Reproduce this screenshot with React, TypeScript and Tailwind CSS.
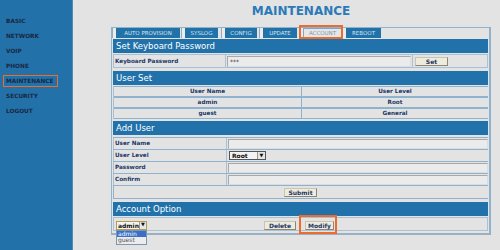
import React from "react";

const Tab = ({ label, className, active }: { label: string; className: string; active?: boolean }) => (
  <div className={"flex h-full items-stretch " + className}>
    <div className="w-[4px] shrink-0 border-l border-[#9aa9b8] bg-[#ececec]" />
    {active ? (
      <div className="relative flex flex-1 items-center justify-center border border-[#7fa6c6] bg-[#e6e6e6] text-[5.5px] text-[#7b96b1]">
        {label}
        <span className="absolute -left-[5px] -right-[2px] -top-[4px] -bottom-[2px] border-2 border-[#ec6b2d]" />
      </div>
    ) : (
      <div className="flex flex-1 items-center justify-center bg-[#2272aa] text-[5.5px] text-[#d6e4ef]">{label}</div>
    )}
  </div>
);

const Header = ({ title, className }: { title: string; className?: string }) => (
  <div className={"flex h-[14px] items-center bg-[#2172aa] pl-[3px] text-[8.5px] text-white " + (className ?? "")}>{title}</div>
);

const Btn = ({ label, className }: { label: string; className?: string }) => (
  <div
    className={
      "flex h-[9px] items-center justify-center border border-[#c8c4b2] border-b-[#8a877a] border-r-[#8a877a] bg-[#eeebdc] text-[6px] font-bold text-[#1d3766] " +
      (className ?? "")
    }
  >
    {label}
  </div>
);

const Field = () => (
  <div className="h-[10px] flex-1 border border-[#a8a8a8] border-b-[#dcdcdc] border-r-[#dcdcdc] bg-[#ebebeb]" />
);

export default function App() {
  const nav = ["BASIC", "NETWORK", "VOIP", "PHONE", "MAINTENANCE", "SECURITY", "LOGOUT"];
  return (
    <div className="flex h-[250px] w-[500px] overflow-hidden bg-[#e3e3e3] font-['DejaVu_Sans',Verdana,sans-serif]">
      <div className="flex w-[73px] shrink-0 flex-col gap-[3px] border-r border-[#4f8cbb] bg-[#2272a9] pt-[15px]">
        {nav.map((n) => (
          <div key={n} className="relative flex h-[12px] items-center pl-[6px] text-[5.8px] font-bold text-[#1a2742]">
            {n}
            {n === "MAINTENANCE" && (
              <span className="absolute left-[3px] top-0 bottom-0 w-[55px] border-[1.5px] border-[#ec6b2d]" />
            )}
          </div>
        ))}
      </div>

      <div className="flex-1 pl-[38px]">
        <div className="w-[380px]">
          <div className="flex h-[27px] items-start justify-center pt-[4px] text-[12px] font-bold leading-[14px] text-[#2a7ab8]">
            MAINTENANCE
          </div>
          <div className="h-[208px] border border-[#8fb3cf] border-b-2 border-r-2 border-b-[#9ab0c2] border-r-[#8fb3cf]">
            <div className="flex h-[10px]">
              <Tab label="AUTO PROVISION" className="w-[68px]" />
              <Tab label="SYSLOG" className="ml-[1px] w-[37px]" />
              <Tab label="CONFIG" className="ml-[3px] w-[36px]" />
              <Tab label="UPDATE" className="ml-[2px] w-[38px]" />
              <Tab label="ACCOUNT" active className="ml-[2px] w-[43px]" />
              <Tab label="REBOOT" className="w-[39px]" />
            </div>

            <div className="px-[1px] pt-[1px]">
              <Header title="Set Keyboard Password" />
              <div className="mt-[1px] flex h-[14px] items-stretch">
                <div className="flex w-[113px] items-center border border-[#a9c1d4] pl-[1px] text-[5.7px] font-bold text-[#1d3766]">
                  Keyboard Password
                </div>
                <div className="flex w-[186px] items-center border-y border-[#a9c1d4] px-[1px]">
                  <div className="flex h-[11px] flex-1 items-center border border-[#a8a8a8] border-b-[#dcdcdc] border-r-[#dcdcdc] bg-[#ebebeb] pl-[2px] text-[6px] text-[#333]">
                    ***
                  </div>
                </div>
                <div className="flex flex-1 items-center border border-[#a9c1d4] pl-[2px]">
                  <Btn label="Set" className="w-[33px]" />
                </div>
              </div>

              <Header title="User Set" className="mt-[3px]" />
              <div className="mt-[1px] border-l border-[#a9c1d4]">
                {[
                  ["User Name", "User Level"],
                  ["admin", "Root"],
                  ["guest", "General"],
                ].map(([a, b]) => (
                  <div key={a} className="flex h-[11px] border-y border-[#8fb3cf] text-[5.7px] font-bold text-[#1d3766]">
                    <div className="flex w-[188px] items-center justify-center border-r border-[#8fb3cf]">{a}</div>
                    <div className="flex flex-1 items-center justify-center">{b}</div>
                  </div>
                ))}
              </div>

              <Header title="Add User" className="mt-[2px]" />
              <div className="mt-[2px] border-t border-[#8fb3cf]">
                {["User Name", "User Level", "Password", "Confirm"].map((l) => (
                  <div key={l} className="flex h-[12px] border-b border-[#8fb3cf] text-[5.7px] font-bold text-[#1d3766]">
                    <div className="flex w-[114px] items-center border-x border-[#a9c1d4] pl-[1px]">{l}</div>
                    <div className="flex flex-1 items-center pl-[1px]">
                      {l === "User Level" ? (
                        <div className="ml-[1px] flex h-[9px] w-[37px] items-center border border-[#555] bg-[#f4f4f4] pl-[2px] text-[6px] text-[#111]">
                          <span className="flex-1">Root</span>
                          <span className="flex h-full w-[8px] items-center justify-center border-l border-[#999] bg-[#e6e6e6] text-[5px]">▼</span>
                        </div>
                      ) : (
                        <Field />
                      )}
                    </div>
                  </div>
                ))}
                <div className="flex h-[13px] items-center border-b border-l border-[#8fb3cf] pl-[170px]">
                  <Btn label="Submit" className="w-[33px]" />
                </div>
              </div>

              <Header title="Account Option" className="mt-[3px]" />
              <div className="mt-[1px] flex h-[14px] items-center border border-[#a9c1d4] pl-[1px] pt-[2px] text-[6px] font-bold text-[#1d3766]">
                <div className="relative ml-[1px] flex h-[9px] w-[31px] items-center border border-[#b79a4a] bg-[#f4f4f4] pl-[1px] text-[6px] text-[#111]">
                  <span className="flex-1">admin</span>
                  <span className="flex h-full w-[8px] items-center justify-center border-l border-[#999] bg-[#e6e6e6] text-[5px]">▼</span>
                  <div className="absolute left-[-1px] top-[8px] z-10 w-[31px] border border-[#7d96b0] bg-[#ececec] text-[6px] font-normal">
                    <div className="h-[6.5px] bg-[#3a6fc8] pl-[1px] leading-[6.5px] text-white">admin</div>
                    <div className="h-[6.5px] pl-[1px] leading-[6.5px] text-[#555]">guest</div>
                  </div>
                </div>
                <Btn label="Delete" className="ml-[117px] w-[32px]" />
                <div className="relative ml-[9px]">
                  <Btn label="Modify" className="w-[29px]" />
                  <span className="absolute -left-[6px] -right-[3px] -top-[6px] -bottom-[4px] border-2 border-[#ec6b2d]" />
                </div>
              </div>
            </div>
          </div>
        </div>
      </div>
    </div>
  );
}
